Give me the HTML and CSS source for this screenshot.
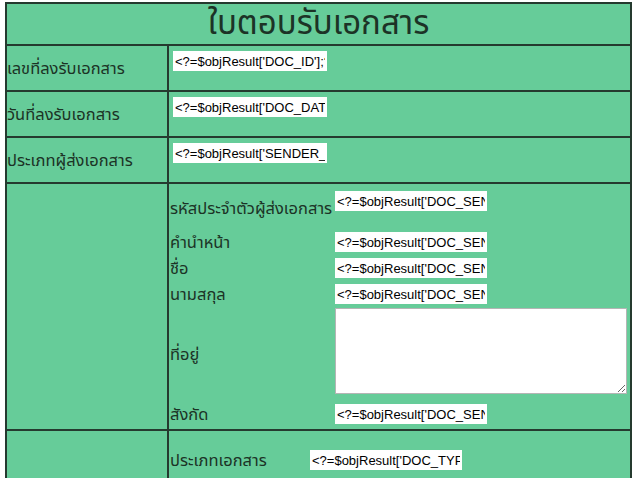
FILE: index.html
```html
<!DOCTYPE html>
<html lang="th">
<head>
<meta charset="utf-8">
<title>ใบตอบรับเอกสาร</title>
<link rel="stylesheet" href="styles.css">
</head>
<body>
<table class="form">
  <colgroup>
    <col class="c1">
    <col class="c2">
  </colgroup>
  <tr>
    <th colspan="2" class="title">ใบตอบรับเอกสาร</th>
  </tr>
  <tr>
    <td class="label">เลขที่ลงรับเอกสาร</td>
    <td class="field"><div class="box"><input class="txt" type="text" value="<?=$objResult['DOC_ID'];?>"></div></td>
  </tr>
  <tr>
    <td class="label">วันที่ลงรับเอกสาร</td>
    <td class="field"><div class="box"><input class="txt" type="text" value="<?=$objResult['DOC_DATE'];?>"></div></td>
  </tr>
  <tr>
    <td class="label">ประเภทผู้ส่งเอกสาร</td>
    <td class="field"><div class="box"><input class="txt" type="text" value="<?=$objResult['SENDER_TYPE'];?>"></div></td>
  </tr>
  <tr>
    <td class="label"></td>
    <td class="field">
      <div class="sub sender">
        <div class="sl">รหัสประจำตัวผู้ส่งเอกสาร</div>
        <div class="sv first"><input class="txt small" type="text" value="<?=$objResult['DOC_SENDER_ID'];?>"></div>
        <div class="sl">คำนำหน้า</div>
        <div class="sv"><input class="txt small" type="text" value="<?=$objResult['DOC_SENDER_PREFIX'];?>"></div>
        <div class="sl">ชื่อ</div>
        <div class="sv"><input class="txt small" type="text" value="<?=$objResult['DOC_SENDER_NAME'];?>"></div>
        <div class="sl">นามสกุล</div>
        <div class="sv"><input class="txt small" type="text" value="<?=$objResult['DOC_SENDER_SURNAME'];?>"></div>
        <div class="sl">ที่อยู่</div>
        <div class="sv area"><textarea class="addr"></textarea></div>
        <div class="sl">สังกัด</div>
        <div class="sv"><input class="txt small" type="text" value="<?=$objResult['DOC_SENDER_DEPT'];?>"></div>
      </div>
    </td>
  </tr>
  <tr>
    <td class="label"></td>
    <td class="field">
      <div class="sub doc">
        <div class="sl">ประเภทเอกสาร</div>
        <div class="sv"><input class="txt small" type="text" value="<?=$objResult['DOC_TYPE'];?>"></div>
        <div class="sl"></div>
        <div class="sv"><textarea class="detail"></textarea></div>
      </div>
    </td>
  </tr>
</table>
</body>
</html>
```

FILE: styles.css
```css
html, body {
  margin: 0;
  padding: 0;
  background: #ffffff;
}

body {
  font-family: Tahoma, "Noto Sans Thai", "Noto Sans", "DejaVu Sans", sans-serif;
  color: #1c3326;
  font-size: 16.5px;
}

.form {
  border-collapse: separate;
  border-spacing: 0;
  border: 2px solid #253a2f;
  margin: 2px 0 0 5px;
  width: 627px;
  table-layout: fixed;
  background: #66cc99;
}

.c1 {
  width: 162px;
}

.c2 {
  width: 461px;
}

.form th,
.form td {
  padding: 0;
}

.title {
  height: 40px;
  font-size: 33px;
  font-weight: normal;
  text-align: center;
  vertical-align: middle;
  line-height: 40px;
}

.label {
  border-top: 2px solid #253a2f;
  border-right: 2px solid #253a2f;
  vertical-align: middle;
  white-space: nowrap;
  padding-top: 3px;
}

.field {
  border-top: 2px solid #253a2f;
  vertical-align: top;
}

.box {
  height: 44px;
  box-sizing: border-box;
  padding: 5px 0 0 4px;
}

.txt {
  display: block;
  width: 154px;
  height: 20px;
  box-sizing: border-box;
  border: 0;
  padding: 0 2px;
  margin: 0;
  background: #ffffff;
  color: #000000;
  font-family: "Liberation Sans", Arial, sans-serif;
  font-size: 13px;
}

.txt.small {
  width: 152px;
}

.sub {
  display: grid;
}

.sender {
  grid-template-columns: 166px 1fr;
  padding: 4px 0 2px 0;
}

.doc {
  grid-template-columns: 141px 1fr;
  padding: 16px 0 0 0;
}

.sl {
  display: flex;
  align-items: center;
  white-space: nowrap;
  padding-left: 1px;
}

.sv {
  padding: 3px 0;
}

.sv.first {
  padding-bottom: 18px;
}

.sv.area {
  padding: 1px 0 7px 0;
}

.addr {
  display: block;
  width: 292px;
  height: 86px;
  box-sizing: border-box;
  margin: 0;
  border: 1px solid #b5b5b5;
  background: #ffffff;
  resize: both;
}

.detail {
  display: block;
  width: 291px;
  height: 80px;
  box-sizing: border-box;
  margin: 3px 0 0 0;
  border: 1px solid #b5b5b5;
  background: #ffffff;
}
```
